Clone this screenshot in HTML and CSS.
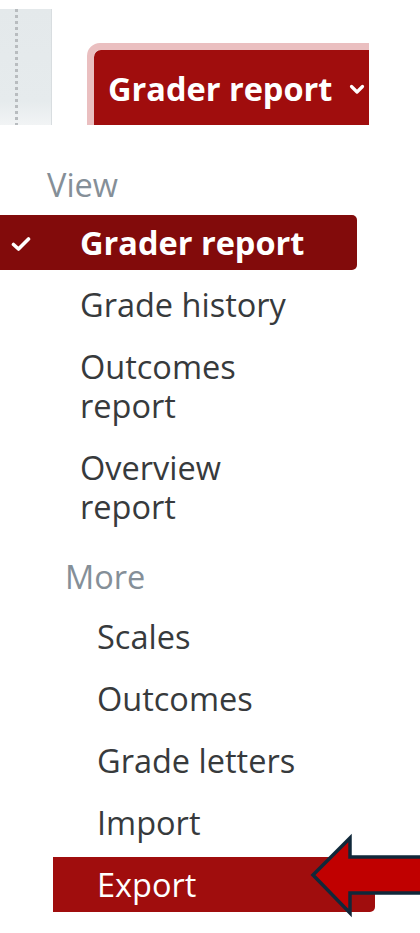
FILE: index.html
```html
<!DOCTYPE html>
<html>
<head>
<meta charset="utf-8">
<link rel="stylesheet" href="styles.css">
</head>
<body>
<div class="topbar">
  <div class="rail"><div class="dots"></div></div>
  <div class="ring">
    <div class="select-btn">
      <span>Grader report</span>
      <svg class="chev" viewBox="0 0 16 11" width="16" height="11"><path d="M2.5 2.5 L8 8 L13.5 2.5" fill="none" stroke="#fff" stroke-width="3.2" stroke-linecap="round" stroke-linejoin="round"/></svg>
    </div>
  </div>
</div>
<nav class="menu">
  <div class="head head-view">View</div>
  <div class="item active">
    <svg class="check" viewBox="0 0 20 16" width="20" height="16"><path d="M2.5 8.5 L7.5 13 L17.5 3" fill="none" stroke="#fff" stroke-width="3.6" stroke-linecap="round" stroke-linejoin="round"/></svg>
    <span>Grader report</span>
  </div>
  <div class="item">Grade history</div>
  <div class="item">Outcomes<br>report</div>
  <div class="item">Overview<br>report</div>
  <div class="head head-more">More</div>
  <div class="sub">
    <div class="item">Scales</div>
    <div class="item">Outcomes</div>
    <div class="item">Grade letters</div>
    <div class="item">Import</div>
    <div class="item export">Export</div>
  </div>
</nav>
<svg class="arrow" viewBox="0 0 112 82" width="112" height="82">
  <path d="M3 40 L40 3 L40 22 L115 22 L115 58 L40 58 L40 78 Z" fill="#c00000" stroke="#10283a" stroke-width="3.5" stroke-linejoin="miter"/>
</svg>
</body>
</html>
```
FILE: styles.css
```css
* { box-sizing: border-box; }
html, body { margin: 0; padding: 0; background: #fff; }
body {
  font-family: "Open Sans", "DejaVu Sans", sans-serif;
  color: #373a3c;
  position: relative;
  width: 420px;
  height: 933px;
  overflow: hidden;
}
.topbar {
  display: flex;
  align-items: flex-start;
  width: 369px;
  height: 125px;
  overflow: hidden;
}
.rail {
  width: 52px;
  height: 116px;
  margin-top: 9px;
  background: linear-gradient(to bottom, #e4e9eb 0%, #e6ebed 80%, #f2f4f5 100%);
  border-right: 1px solid #d8dde0;
  flex: none;
  position: relative;
}
.dots {
  margin-left: 15px;
  width: 3px;
  height: 116px;
  background: repeating-linear-gradient(to bottom, #b8bcbf 0 3px, transparent 3px 6px);
}
.ring {
  margin-left: 35px;
  margin-top: 43px;
  border: 7px solid #eabfc0;
  border-radius: 13px;
  flex: none;
}
.select-btn {
  display: flex;
  align-items: flex-start;
  background: #a00d0d;
  color: #fff;
  border-radius: 7px;
  height: 100px;
  padding: 19px 40px 0 14px;
  font-weight: 700;
  font-size: 32.5px;
  line-height: 39px;
  white-space: nowrap;
}
.chev { margin-left: 17px; margin-top: 15px; }
.menu {
  display: flex;
  flex-direction: column;
  padding-top: 40px;
  font-size: 32.5px;
  line-height: 39px;
}
.head { color: #858f98; }
.head-view { padding-left: 47px; margin-bottom: 11px; }
.head-more { padding-left: 65px; margin-top: 23px; margin-bottom: 6px; }
.item {
  margin: 7px 0 0;
  padding: 8px 0 8px 80px;
  width: 357px;
  border-radius: 0 5px 5px 0;
}
.head-view + .item { margin-top: 0; }
.item.active {
  display: flex;
  align-items: center;
  position: relative;
  background: #820b0b;
  color: #fff;
  font-weight: 700;
}
.check { position: absolute; left: 11px; top: 21px; }
.sub { display: flex; flex-direction: column; padding-left: 53px; }
.sub .item { padding-left: 44px; width: 322px; border-radius: 0 0 5px 0; }
.sub .item.export { background: #a00d0d; color: #fff; }
.arrow { position: absolute; left: 310px; top: 835px; overflow: visible; }
```
